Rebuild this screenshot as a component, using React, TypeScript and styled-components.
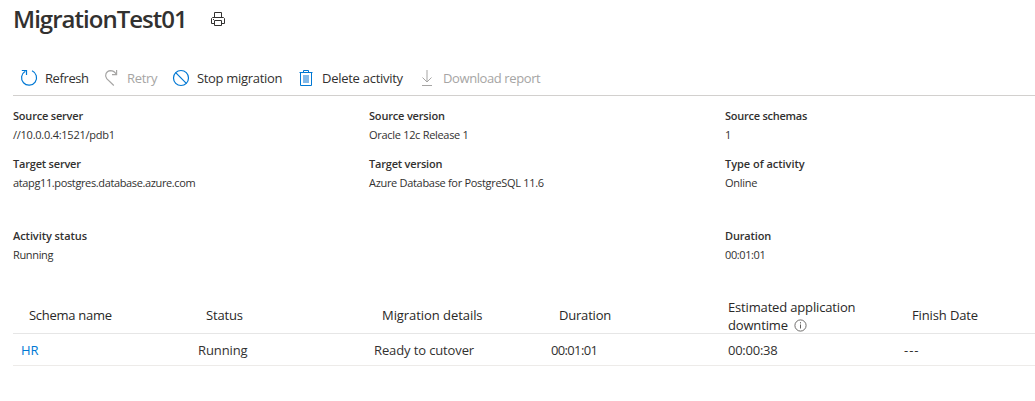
import React from 'react';
import styled, { createGlobalStyle } from 'styled-components';

const GlobalStyle = createGlobalStyle`
  * { box-sizing: border-box; }
  body {
    margin: 0;
    background: #fff;
    color: #323130;
    font-family: 'Open Sans', 'Noto Sans', sans-serif;
    overflow: hidden;
  }
`;

const Page = styled.main`
  height: 401px;
  padding-left: 13px;
  overflow: hidden;
`;

const Header = styled.header`
  display: flex;
  align-items: center;
  gap: 24px;
  height: 38px;
`;

const Title = styled.h1`
  margin: 0;
  width: 174px;
  font-size: 24px;
  line-height: 32px;
  font-weight: 600;
  letter-spacing: -0.98px;
  white-space: nowrap;
`;

const Toolbar = styled.div`
  display: flex;
  align-items: center;
  height: 36px;
  margin-top: 22px;
  padding-left: 7px;
  border-bottom: 1px solid #d2d0ce;
`;

const Command = styled.button<{ $width: number; $track?: number; $gap?: number }>`
  display: flex;
  align-items: center;
  gap: ${(p) => p.$gap ?? 7}px;
  width: ${(p) => p.$width}px;
  height: 35px;
  padding: 0;
  border: 0;
  background: none;
  color: #323130;
  font: 13px/18px 'Open Sans', 'Noto Sans', sans-serif;
  letter-spacing: ${(p) => p.$track ?? 0}px;
  white-space: nowrap;
  &:disabled { color: #a6a5a4; }
  svg { flex: none; }
`;

const Details = styled.dl`
  display: grid;
  grid-template-columns: repeat(3, 356px);
  grid-template-rows: 48px 72px 65px;
  margin: 10px 0 0;
`;

const Field = styled.div<{ $column: number }>`
  grid-column: ${(p) => p.$column};
`;

const Label = styled.dt<{ $track: number }>`
  font-size: 11px;
  line-height: 19px;
  font-weight: 600;
  letter-spacing: ${(p) => p.$track}px;
`;

const Value = styled.dd<{ $track: number }>`
  margin: 0;
  font-size: 11px;
  line-height: 19px;
  letter-spacing: ${(p) => p.$track}px;
`;

const Row = styled.div<{ $head?: boolean }>`
  display: grid;
  grid-template-columns: 177px 176px 177px 177px 176px 1fr;
  align-items: center;
  height: ${(p) => (p.$head ? 43 : 32)}px;
  padding-top: ${(p) => (p.$head ? 4 : 0)}px;
  border-bottom: 1px solid ${(p) => (p.$head ? '#e6e6e6' : '#edebe9')};
`;

const Cell = styled.div<{ $inset?: number; $track: number }>`
  padding-left: ${(p) => p.$inset ?? 8}px;
  font-size: 13px;
  line-height: 18px;
  letter-spacing: ${(p) => p.$track}px;
  white-space: nowrap;
  svg { margin-left: 3px; vertical-align: -2px; }
`;

const HeadCell = styled(Cell)`
  color: #292827;
`;

const WrappedHeadCell = styled(HeadCell)`
  padding-top: 3px;
`;

const SchemaLink = styled.a`
  color: #0078d4;
  text-decoration: none;
`;

const PrintIcon = () => (
  <svg width="14" height="14" viewBox="0 0 14 14" fill="none" stroke="#323130">
    <path d="M3.5 5.5v-5h7v5M3 11.5H.5v-5l1-1h11l1 1v5H11M3.5 8.5h7v5h-7zM2 7.5h1" />
  </svg>
);

const RefreshIcon = () => (
  <svg width="18" height="18" viewBox="0 0 18 18" fill="none" stroke="#0078d4" strokeWidth="1.2">
    <path d="M12 1.8A7.5 7.5 0 1 1 5.3 2.2M1.8 1.5h4.7v4.6" />
  </svg>
);

const RetryIcon = () => (
  <svg width="16" height="18" viewBox="0 0 16 18" fill="none" stroke="#a6a5a4" strokeWidth="1.2">
    <path d="M9.8 16.5 2.7 9.7A5 5 0 0 1 6.3 1.6c3 0 5 1.7 6.1 4M12.6 1v4.7H8" />
  </svg>
);

const StopIcon = () => (
  <svg width="18" height="18" viewBox="0 0 18 18" fill="none" stroke="#0078d4" strokeWidth="1.2">
    <circle cx="9" cy="9" r="7.5" />
    <path d="m3.7 3.7 10.6 10.6" />
  </svg>
);

const DeleteIcon = () => (
  <svg width="14" height="18" viewBox="0 0 14 18" fill="none" stroke="#0078d4">
    <path d="M4 6h6v8H4z" fill="#83b9e8" stroke="none" />
    <path d="M.5 3.5h13M4.5 3V1.5h5V3M1.5 4v12.5h11V4" />
  </svg>
);

const DownloadIcon = () => (
  <svg width="14" height="18" viewBox="0 0 14 18" fill="none" stroke="#a6a5a4">
    <path d="M7 1v12M2.5 8.5 7 13l4.5-4.5M2 16.5h10" />
  </svg>
);

const InfoIcon = () => (
  <svg width="13" height="13" viewBox="0 0 13 13" fill="none" stroke="#605e5c">
    <circle cx="6.5" cy="6.5" r="5.6" strokeWidth=".9" />
    <path d="M6.5 5.5v4M6.5 3.2v1.2" />
  </svg>
);

const fields = [
  { column: 1, label: 'Source server', value: '//10.0.0.4:1521/pdb1', lt: -0.2, vt: -0.25 },
  { column: 2, label: 'Source version', value: 'Oracle 12c Release 1', lt: -0.18, vt: -0.3 },
  { column: 3, label: 'Source schemas', value: '1', lt: -0.25, vt: 0 },
  { column: 1, label: 'Target server', value: 'atapg11.postgres.database.azure.com', lt: -0.2, vt: -0.37 },
  { column: 2, label: 'Target version', value: 'Azure Database for PostgreSQL 11.6', lt: -0.2, vt: -0.31 },
  { column: 3, label: 'Type of activity', value: 'Online', lt: -0.03, vt: -0.25 },
  { column: 1, label: 'Activity status', value: 'Running', lt: -0.07, vt: -0.35 },
  { column: 3, label: 'Duration', value: '00:01:01', lt: -0.15, vt: -0.4 },
];

export default function App() {
  return (
    <Page>
      <GlobalStyle />
      <Header>
        <Title>MigrationTest01</Title>
        <PrintIcon />
      </Header>
      <Toolbar>
        <Command $width={84} $track={-0.4}><RefreshIcon />Refresh</Command>
        <Command $width={68} $track={-0.3} disabled><RetryIcon />Retry</Command>
        <Command $width={127} $track={-0.32}><StopIcon />Stop migration</Command>
        <Command $width={121} $track={-0.27} $gap={9}><DeleteIcon />Delete activity</Command>
        <Command $width={140} $track={-0.4} $gap={9} disabled><DownloadIcon />Download report</Command>
      </Toolbar>
      <Details>
        {fields.map((f) => (
          <Field key={f.label} $column={f.column}>
            <Label $track={f.lt}>{f.label}</Label>
            <Value $track={f.vt}>{f.value}</Value>
          </Field>
        ))}
      </Details>
      <Row $head>
        <HeadCell $inset={16} $track={-0.28}>Schema name</HeadCell>
        <HeadCell $inset={16} $track={-0.15}>Status</HeadCell>
        <HeadCell $inset={16} $track={-0.06}>Migration details</HeadCell>
        <HeadCell $inset={16} $track={-0.2}>Duration</HeadCell>
        <WrappedHeadCell $track={-0.16}>Estimated application<br />downtime <InfoIcon /></WrappedHeadCell>
        <HeadCell $inset={16} $track={-0.13}>Finish Date</HeadCell>
      </Row>
      <Row>
        <Cell $track={0}><SchemaLink>HR</SchemaLink></Cell>
        <Cell $track={-0.1}>Running</Cell>
        <Cell $track={-0.12}>Ready to cutover</Cell>
        <Cell $track={-0.65}>00:01:01</Cell>
        <Cell $track={-0.25}>00:00:38</Cell>
        <Cell $track={1}>---</Cell>
      </Row>
    </Page>
  );
}
